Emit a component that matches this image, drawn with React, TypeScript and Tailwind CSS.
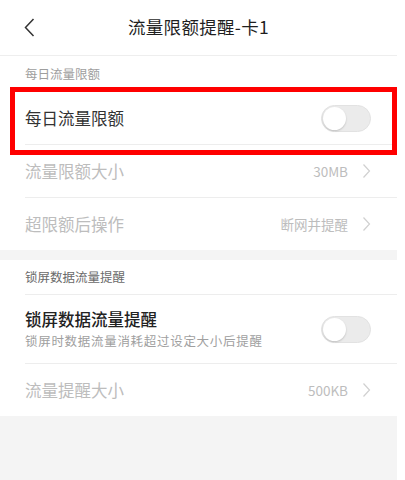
import React from "react";

const font = { fontFamily: '"Noto Sans CJK SC", "Noto Sans", sans-serif' };

function Toggle() {
  return (
    <div className="w-[50px] h-[27px] rounded-full bg-[#ebebeb] border border-[#e2e2e2] flex items-center px-[1px]">
      <div className="w-[23px] h-[23px] rounded-full bg-white shadow-[0_1px_2px_rgba(0,0,0,0.18)]" />
    </div>
  );
}

function Chevron() {
  return (
    <svg width="9" height="16" viewBox="0 0 9 16" className="ml-[14px]">
      <polyline points="1.5,1.5 7.5,8 1.5,14.5" fill="none" stroke="#d0d0d0" strokeWidth="1.2" />
    </svg>
  );
}

function ValueRow({ label, value, border }: { label: string; value: string; border?: boolean }) {
  return (
    <div className={`ml-[25px] pr-[26px] flex items-center justify-between ${border ? "h-[53px] border-b border-[#ededed]" : "h-[52px]"}`}>
      <span className="text-[16.5px] text-[#bdbdbd]">{label}</span>
      <div className="flex items-center">
        <span className="text-[13.5px] text-[#bdbdbd]">{value}</span>
        <Chevron />
      </div>
    </div>
  );
}

export default function App() {
  return (
    <div className="w-[405px] h-[480px] bg-white" style={font}>
      <div className="relative w-[397px] h-[480px] bg-[#f4f4f4] flex flex-col">
        {/* Header */}
        <div className="h-[56px] bg-white border-b border-[#eeeeee] grid grid-cols-[1fr_auto_1fr] items-center">
          <div className="pl-[24px] flex items-center">
            <svg width="11" height="19" viewBox="0 0 11 19">
              <polyline points="9.5,1 1.5,9.5 9.5,18" fill="none" stroke="#333333" strokeWidth="1.5" />
            </svg>
          </div>
          <div className="text-[17.5px] font-normal text-[#1f1f1f] tracking-[0.3px]">流量限额提醒-卡1</div>
          <div />
        </div>

        {/* Section 1 */}
        <div className="bg-white">
          <div className="h-[36px] pl-[25px] flex items-center text-[12.5px] text-[#9e9e9e]">每日流量限额</div>
          <div className="ml-[25px] pr-[26px] h-[53px] border-b border-[#ededed] flex items-center justify-between">
            <span className="text-[16.5px] text-[#333333]">每日流量限额</span>
            <Toggle />
          </div>
          <ValueRow label="流量限额大小" value="30MB" border />
          <ValueRow label="超限额后操作" value="断网并提醒" />
        </div>

        <div className="h-[10px]" />

        {/* Section 2 */}
        <div className="bg-white">
          <div className="ml-[25px] h-[35px] border-b border-[#ededed] flex items-center text-[12.5px] text-[#6a6a6a]">锁屏数据流量提醒</div>
          <div className="ml-[25px] pr-[26px] h-[69px] border-b border-[#ededed] flex items-center justify-between">
            <div className="flex flex-col">
              <span className="text-[16.5px] leading-[22px] font-medium text-[#222222]">锁屏数据流量提醒</span>
              <span className="text-[12.5px] leading-[18px] tracking-[0.7px] text-[#a0a0a0] mt-[2px]">锁屏时数据流量消耗超过设定大小后提醒</span>
            </div>
            <Toggle />
          </div>
          <ValueRow label="流量提醒大小" value="500KB" />
        </div>

        {/* Annotation box */}
        <div className="absolute left-[10px] top-[87px] w-[387px] h-[68px] border-[5px] border-[#ff0000]" />
      </div>
    </div>
  );
}
